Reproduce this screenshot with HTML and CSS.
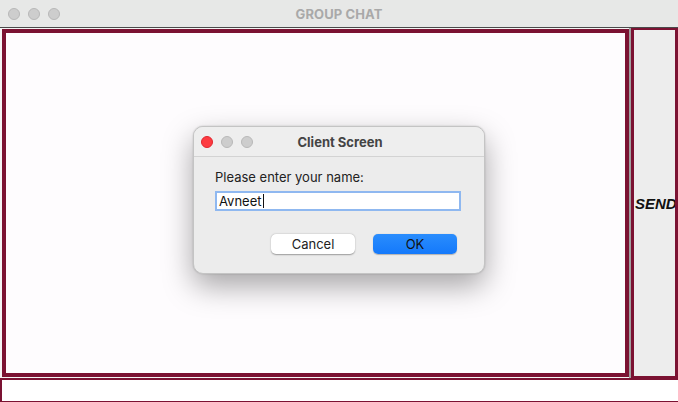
FILE: index.html
```html
<!DOCTYPE html>
<html>
<head>
<meta charset="utf-8">
<link rel="stylesheet" href="styles.css">
</head>
<body>
<div class="window">
  <div class="titlebar">
    <div class="lights">
      <span class="light"></span><span class="light"></span><span class="light"></span>
    </div>
    <div class="title">GROUP CHAT</div>
  </div>
  <div class="main">
    <div class="chat-wrap"><div class="chat"></div></div>
    <div class="send"><span>SEND</span></div>
  </div>
  <div class="field"></div>

  <div class="dialog">
    <div class="dlg-title">
      <div class="lights dlg-lights">
        <span class="light red"></span><span class="light"></span><span class="light"></span>
      </div>
      <div class="dlg-name">Client Screen</div>
    </div>
    <div class="dlg-body">
      <div class="label">Please enter your name:</div>
      <div class="input">Avneet<span class="caret"></span></div>
      <div class="buttons">
        <div class="btn cancel">Cancel</div>
        <div class="btn ok">OK</div>
      </div>
    </div>
  </div>
</div>
</body>
</html>
```
FILE: styles.css
```css
html, body { margin: 0; padding: 0; }
body { width: 678px; height: 402px; overflow: hidden; background: #ececec; font-family: "Inter", "Liberation Sans", sans-serif; }
.window { position: relative; width: 678px; height: 402px; display: flex; flex-direction: column; }
.titlebar { height: 27px; background: #e7e8e7; border-bottom: 1px solid #4a4a4a; display: flex; align-items: center; position: relative; }
.lights { display: flex; gap: 8px; padding-left: 8px; }
.light { width: 12px; height: 12px; border-radius: 50%; background: #cdcdcd; border: 1px solid #b8b8b8; box-sizing: border-box; display: block; }
.title { position: absolute; left: 0; right: 0; text-align: center; font-weight: 700; font-size: 13px; color: #a9a9a9; letter-spacing: 0.1px; }
.main { display: flex; height: 350px; }
.chat-wrap { width: 631px; padding: 1px 0 1px 2px; border-right: 2px solid #a0a0a0; box-sizing: border-box; background: #f4f4f4; }
.chat { height: 348px; border: 4px solid #7b1232; background: #fefcfe; box-sizing: border-box; }
.send { width: 47px; margin-top: -1px; border: 3px solid #7b1232; border-bottom-width: 2px; background: #ededed; display: flex; align-items: center; justify-content: flex-start; overflow: hidden; box-sizing: border-box; }
.send span { font-family: "Liberation Sans", sans-serif; font-style: italic; font-weight: 700; font-size: 15px; color: #111; padding-left: 1px; white-space: nowrap; }
.field { height: 24px; border-top: 2px solid #7b1232; border-left: 2px solid #7b1232; border-bottom: 1px solid #7b1232; background: #fff; box-sizing: border-box; }
.dialog { position: absolute; left: 193px; top: 126px; width: 292px; height: 148px; background: #ececec; border-radius: 10px; border: 1px solid #c4c4c4; box-sizing: border-box; box-shadow: 0 12px 30px rgba(0,0,0,0.35), 0 0 2px rgba(0,0,0,0.2); overflow: hidden; }
.dlg-title { height: 29px; border-bottom: 1px solid #d3d3d3; display: flex; align-items: center; position: relative; background: #eeeeee; }
.dlg-lights { padding-left: 7px; }
.red { background: #fd3b41; border-color: #e0262e; }
.dlg-name { position: absolute; left: 0; right: 0; text-align: center; font-weight: 700; font-size: 13px; color: #444; padding-left: 2px; }
.dlg-body { padding: 12px 0 0 21px; }
.label { font-size: 13px; color: #222; height: 16px; }
.input { margin-top: 6px; width: 246px; height: 20px; box-sizing: border-box; border: 2px solid #8fb8f0; background: #fff; font-size: 13px; line-height: 16px; padding-left: 2px; color: #111; display: flex; align-items: center; }
.caret { display: inline-block; width: 1px; height: 14px; background: #111; margin-left: 1px; }
.buttons { display: flex; gap: 18px; margin-top: 23px; padding-left: 56px; }
.btn { width: 84px; height: 20px; border-radius: 5px; font-size: 13px; text-align: center; line-height: 20px; box-sizing: border-box; }
.cancel { background: #fff; color: #222; box-shadow: 0 0.5px 1.5px rgba(0,0,0,0.35); }
.ok { background: linear-gradient(#2a8dfd, #1479fb); color: #111; box-shadow: 0 0.5px 1px rgba(0,0,0,0.25); }
```
